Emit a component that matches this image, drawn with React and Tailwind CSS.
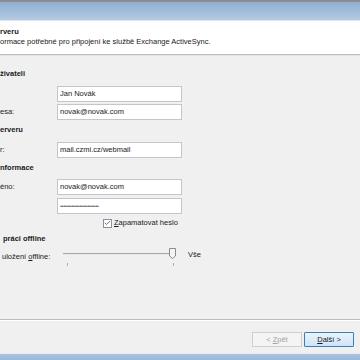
import { Check } from 'lucide-react'

function Field({ label, value, muted }) {
  return (
    <div className="flex h-[16px] items-center">
      <div className="w-[57px] shrink-0">{label}</div>
      <div className="flex h-[16px] w-[125px] items-center border border-[#c3c6cb] bg-white pl-[2px]">
        <span className={muted ? 'text-[6px] tracking-[-0.5px] text-[#666]' : ''}>{value}</span>
      </div>
    </div>
  )
}

function Heading({ children, className = '' }) {
  return <div className={`flex h-[12px] items-center font-bold ${className}`}>{children}</div>
}

export default function App() {
  return (
    <div
      className="flex h-[360px] w-[360px] flex-col overflow-hidden bg-[#f0f0f0] text-[7.5px] text-[#1a1a1a]"
      style={{ fontFamily: '"Liberation Sans", Arial, sans-serif' }}
    >
      {/* window chrome */}
      <div className="h-[2px] shrink-0 bg-[#8c8c8c]" />
      <div className="h-[18px] shrink-0 bg-gradient-to-b from-[#90afd1] to-[#b4cae3]" />
      <div className="h-[1px] shrink-0 bg-[#dde8f4]" />

      {/* header */}
      <div className="h-[33px] shrink-0 bg-white pt-[6px] leading-[10px]">
        <div className="font-bold">rveru</div>
        <div>ormace potřebné pro připojení ke službě Exchange ActiveSync.</div>
      </div>
      <div className="h-[1px] shrink-0 bg-[#bdbdbd]" />
      <div className="h-[1px] shrink-0 bg-[#e4e4e4]" />

      {/* body */}
      <div className="flex min-h-0 flex-1 flex-col">
        <Heading className="mt-[12px]">živateli</Heading>
        <div className="mt-[6px]">
          <Field label="" value="Jan Novák" />
        </div>
        <div className="mt-[2px]">
          <Field label="esa:" value="novak@novak.com" />
        </div>

        <Heading className="mt-[4px]">erveru</Heading>
        <div className="mt-[6px]">
          <Field label="r:" value="mail.czmi.cz/webmail" />
        </div>

        <Heading className="mt-[4px]">nformace</Heading>
        <div className="mt-[5px]">
          <Field label="éno:" value="novak@novak.com" />
        </div>
        <div className="mt-[3px]">
          <Field label="" value="••••••••••••••••••••••••" muted />
        </div>

        <div className="mt-[3px] flex h-[12px] items-center pl-[103px]">
          <div className="flex h-[9px] w-[9px] items-center justify-center border border-[#8f8f8f] bg-white">
            <Check size={8} strokeWidth={3} className="text-[#3a5f8a]" />
          </div>
          <span className="ml-[2px]">
            <span className="underline">Z</span>apamatovat heslo
          </span>
        </div>

        <Heading className="mt-[4px] pl-[3px]">práci offline</Heading>

        <div className="mt-[3px] flex h-[14px] items-center">
          <div className="w-[62px] shrink-0 pl-[2px] pt-[3px]">
            uložení <span className="underline">o</span>ffline:
          </div>
          <div className="relative h-[14px] w-[116px]">
            <div className="absolute left-[1px] top-[5px] h-[2px] w-[110px] border-t border-[#a8a8a8] bg-[#e8e8e8]" />
            <svg className="absolute left-[107px] top-0" width="7" height="11" viewBox="0 0 7 11">
              <path d="M0.5 0.5 H6.5 V8 L3.5 10.5 L0.5 8 Z" fill="#f3f3f3" stroke="#8a8a8a" />
            </svg>
          </div>
          <span className="ml-[10px]">Vše</span>
        </div>
        <div className="relative h-[5px]">
          <div className="absolute left-[67px] top-[1px] h-[3px] w-[1px] bg-[#b0b0b0]" />
          <div className="absolute left-[173px] top-[1px] h-[3px] w-[1px] bg-[#b0b0b0]" />
        </div>
      </div>

      {/* footer */}
      <div className="h-[1px] shrink-0 bg-[#bdbdbd]" />
      <div className="h-[1px] shrink-0 bg-white" />
      <div className="flex h-[32px] shrink-0 items-start justify-end gap-[2px] pr-[6px] pt-[11px]">
        <div className="flex h-[15px] w-[50px] items-center justify-center border border-[#cfcfcf] bg-[#f4f4f4] text-[#a3a3a3]">
          &lt; <span className="ml-[2px] underline">Z</span>pět
        </div>
        <div className="flex h-[15px] w-[50px] items-center justify-center rounded-[1px] border border-[#3d7fb5] bg-gradient-to-b from-[#eaf4fd] to-[#cfe4f7] text-[#1a1a1a]">
          <span className="underline">D</span>alší &gt;
        </div>
      </div>
      <div className="h-[1px] shrink-0 bg-[#e6eef7]" />
      <div className="h-[6px] shrink-0 bg-gradient-to-b from-[#a9c3df] to-[#9cb9d9]" />
    </div>
  )
}
